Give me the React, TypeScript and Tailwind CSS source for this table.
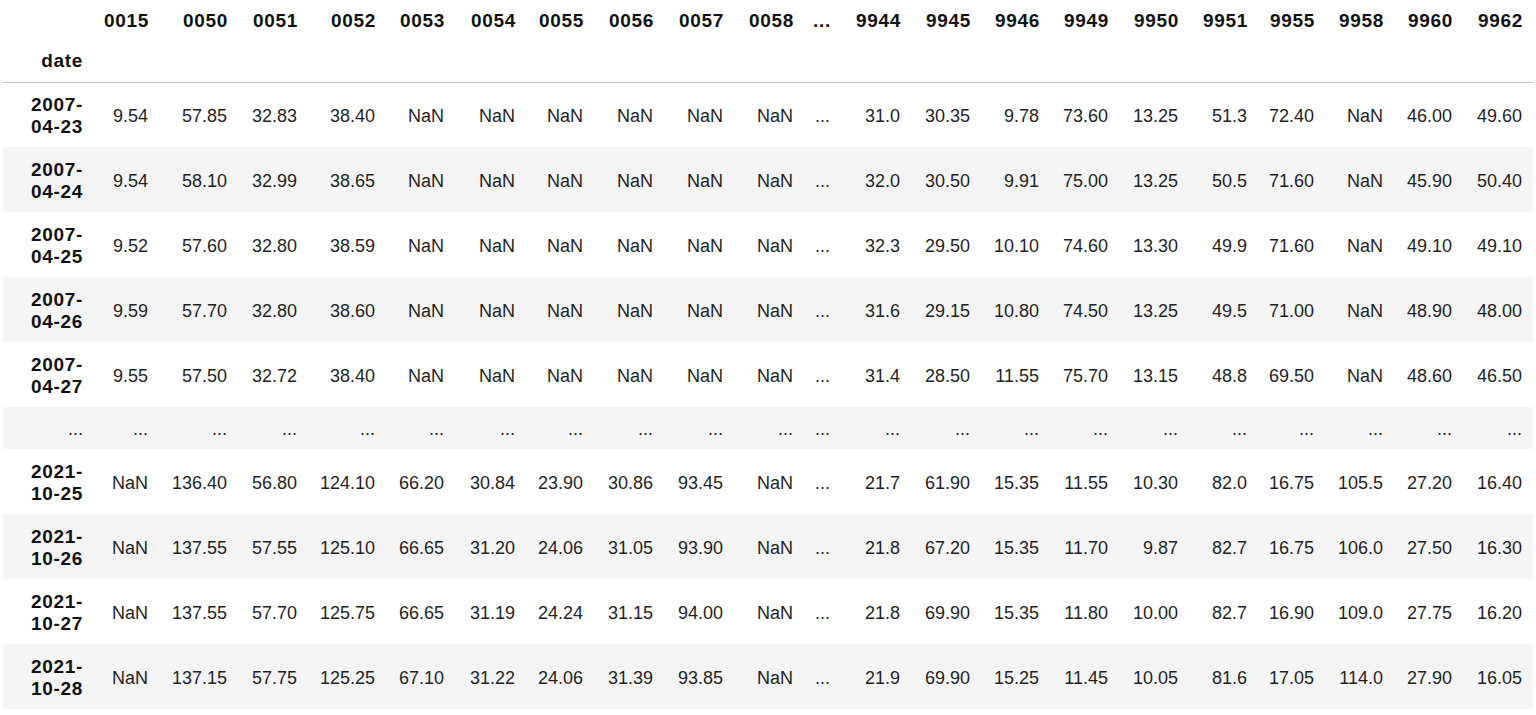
const columns = [
  "0015", "0050", "0051", "0052", "0053", "0054", "0055", "0056", "0057", "0058",
  "...",
  "9944", "9945", "9946", "9949", "9950", "9951", "9955", "9958", "9960", "9962",
]

const colWidths = [
  "w-[90px]",
  "w-[66px]", "w-[79px]", "w-[70px]", "w-[78px]", "w-[69px]", "w-[71px]", "w-[68px]", "w-[70px]", "w-[70px]", "w-[70px]",
  "w-[37px]",
  "w-[70px]", "w-[70px]", "w-[69px]", "w-[69px]", "w-[70px]", "w-[69px]", "w-[67px]", "w-[69px]", "w-[69px]", "w-[70px]",
]

const nan6 = ["NaN", "NaN", "NaN", "NaN", "NaN", "NaN"]

const rows: { date: [string, string]; values: string[] }[] = [
  { date: ["2007-", "04-23"], values: ["9.54", "57.85", "32.83", "38.40", ...nan6, "...", "31.0", "30.35", "9.78", "73.60", "13.25", "51.3", "72.40", "NaN", "46.00", "49.60"] },
  { date: ["2007-", "04-24"], values: ["9.54", "58.10", "32.99", "38.65", ...nan6, "...", "32.0", "30.50", "9.91", "75.00", "13.25", "50.5", "71.60", "NaN", "45.90", "50.40"] },
  { date: ["2007-", "04-25"], values: ["9.52", "57.60", "32.80", "38.59", ...nan6, "...", "32.3", "29.50", "10.10", "74.60", "13.30", "49.9", "71.60", "NaN", "49.10", "49.10"] },
  { date: ["2007-", "04-26"], values: ["9.59", "57.70", "32.80", "38.60", ...nan6, "...", "31.6", "29.15", "10.80", "74.50", "13.25", "49.5", "71.00", "NaN", "48.90", "48.00"] },
  { date: ["2007-", "04-27"], values: ["9.55", "57.50", "32.72", "38.40", ...nan6, "...", "31.4", "28.50", "11.55", "75.70", "13.15", "48.8", "69.50", "NaN", "48.60", "46.50"] },
  { date: ["...", ""], values: Array(21).fill("...") },
  { date: ["2021-", "10-25"], values: ["NaN", "136.40", "56.80", "124.10", "66.20", "30.84", "23.90", "30.86", "93.45", "NaN", "...", "21.7", "61.90", "15.35", "11.55", "10.30", "82.0", "16.75", "105.5", "27.20", "16.40"] },
  { date: ["2021-", "10-26"], values: ["NaN", "137.55", "57.55", "125.10", "66.65", "31.20", "24.06", "31.05", "93.90", "NaN", "...", "21.8", "67.20", "15.35", "11.70", "9.87", "82.7", "16.75", "106.0", "27.50", "16.30"] },
  { date: ["2021-", "10-27"], values: ["NaN", "137.55", "57.70", "125.75", "66.65", "31.19", "24.24", "31.15", "94.00", "NaN", "...", "21.8", "69.90", "15.35", "11.80", "10.00", "82.7", "16.90", "109.0", "27.75", "16.20"] },
  { date: ["2021-", "10-28"], values: ["NaN", "137.15", "57.75", "125.25", "67.10", "31.22", "24.06", "31.39", "93.85", "NaN", "...", "21.9", "69.90", "15.25", "11.45", "10.05", "81.6", "17.05", "114.0", "27.90", "16.05"] },
]

export default function App() {
  return (
    <div className="min-h-screen bg-white pl-[3px] font-['Liberation_Sans',Arial,sans-serif] text-[18px] text-[#1f1f1f]">
      <table className="table-fixed border-collapse w-[1530px] leading-[22px]">
        <colgroup>
          {colWidths.map((w, i) => (
            <col key={i} className={w} />
          ))}
        </colgroup>
        <thead>
          <tr className="h-[41px]">
            <th className="pr-[11px]" />
            {columns.map((c, i) => (
              <th key={i} className="pr-[10px] text-right align-middle text-[19px] font-bold tracking-[0.7px] text-[#111]">
                {c}
              </th>
            ))}
          </tr>
          <tr className="h-[41px] border-b border-[#bdbdbd]">
            <th className="pr-[10px] text-right align-middle text-[19px] font-bold tracking-[0.7px] text-[#111]">date</th>
            {columns.map((_, i) => (
              <th key={i} />
            ))}
          </tr>
        </thead>
        <tbody>
          {rows.map((r, ri) => {
            const ellipsis = r.date[0] === "..."
            return (
              <tr key={ri} className={`${ellipsis ? "h-[42px]" : "h-[65px]"} ${ri % 2 === 1 ? "bg-[#f4f4f4]" : "bg-white"}`}>
                <th className="pr-[10px] pt-[2px] text-right align-middle text-[19px] font-bold tracking-[0.7px] text-[#111]">
                  {ellipsis ? (
                    <span className="text-[18px] font-normal tracking-normal text-[#1f1f1f]">...</span>
                  ) : (
                    <>
                      {r.date[0]}
                      <br />
                      {r.date[1]}
                    </>
                  )}
                </th>
                {r.values.map((v, vi) => (
                  <td key={vi} className="pr-[11px] pt-[2px] text-right align-middle whitespace-nowrap">
                    {v}
                  </td>
                ))}
              </tr>
            )
          })}
        </tbody>
      </table>
    </div>
  )
}
